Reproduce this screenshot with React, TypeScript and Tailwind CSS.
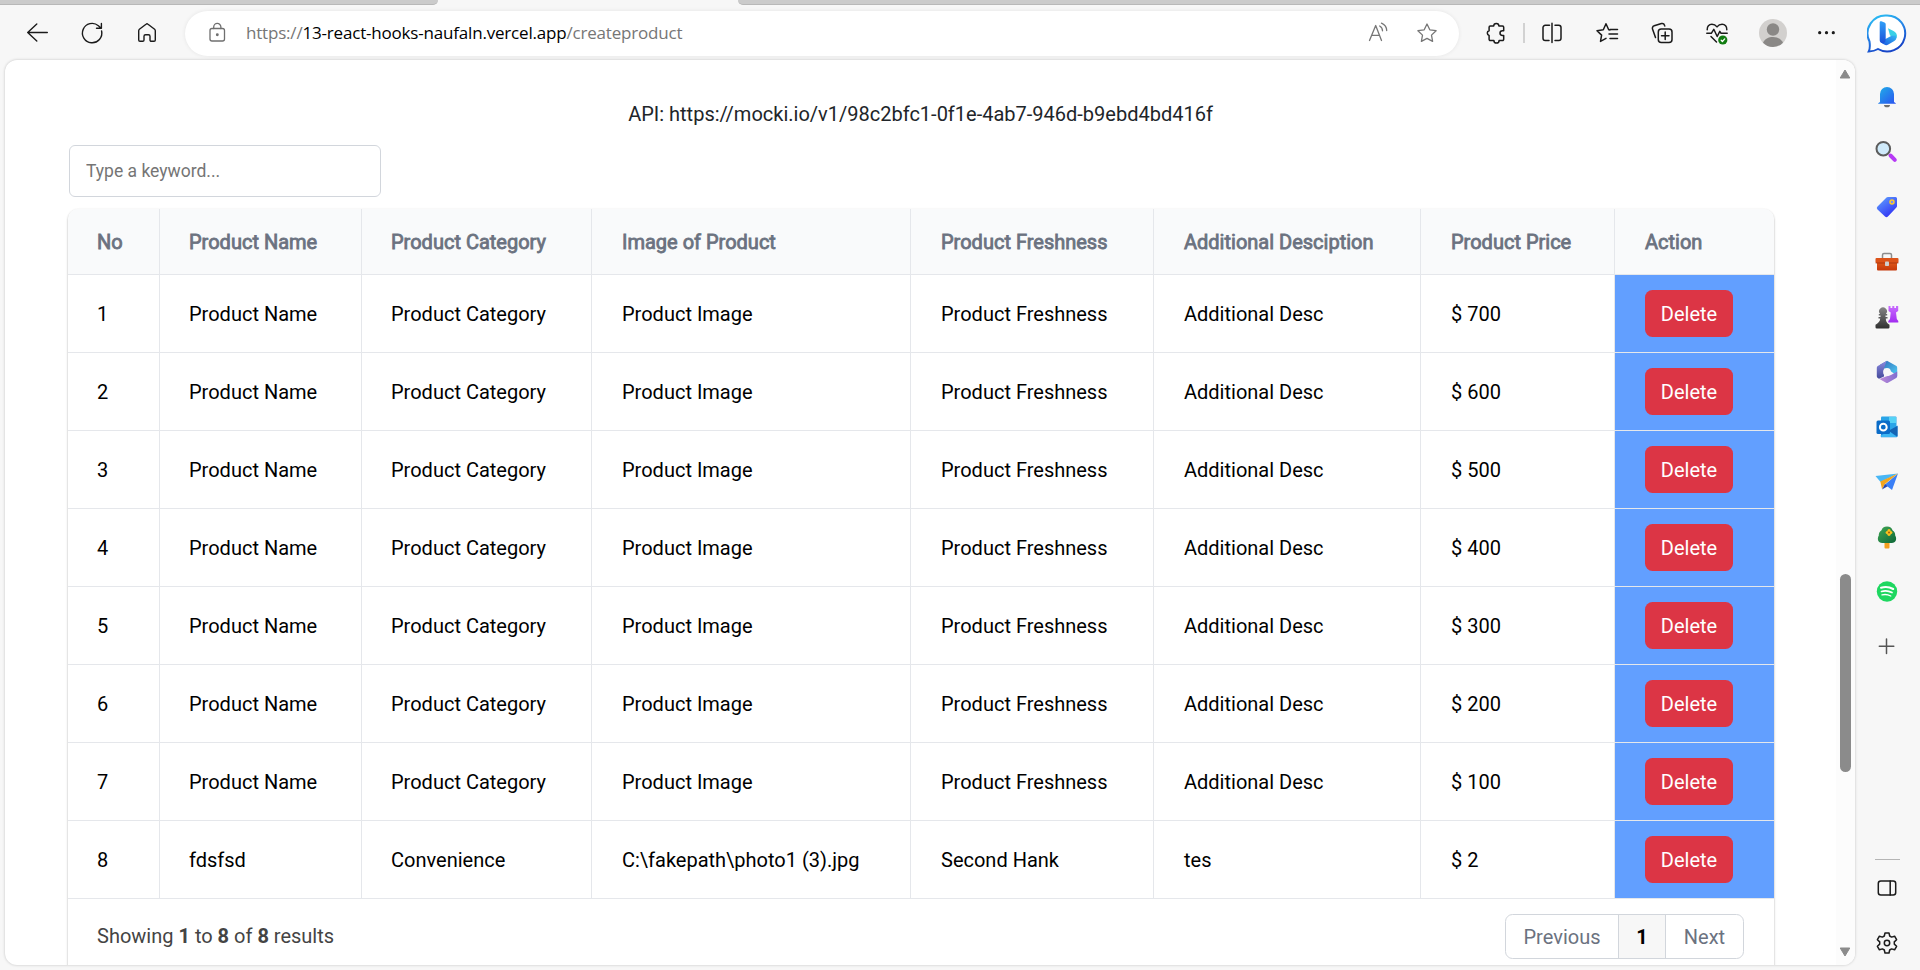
import React from "react";

type IconProps = { className?: string; children: React.ReactNode; size?: number; stroke?: string; sw?: number };

function Svg({ className = "", children, size = 24, stroke = "#1b1b1b", sw = 1.5 }: IconProps) {
  return (
    <svg
      width={size}
      height={size}
      viewBox="0 0 24 24"
      fill="none"
      stroke={stroke}
      strokeWidth={sw}
      strokeLinecap="round"
      strokeLinejoin="round"
      className={"shrink-0 " + className}
    >
      {children}
    </svg>
  );
}

const STAR = "M12 3l2.800 5.800 6.300.9-4.600 4.400 1.100 6.300L12 17.400l-5.600 3 1.100-6.300-4.600-4.400 6.300-.9z";

function Toolbar() {
  return (
    <header className="flex h-[46px] w-full items-center">
      <div className="flex w-[185px] shrink-0 items-center pl-[25px]">
        <Svg className="mr-[31px]" sw={1.400}><path d="M22.300 11.500H2.700M11.800 3L2.700 11.500l9.100 8.500" /></Svg>
        <Svg className="mr-[31px]" sw={1.400}><path d="M21.600 10a9.700 9.700 0 1 1-3.200-5.300l2.800 2.500M21.400 2.500v4.700h-4.900" /></Svg>
        <Svg sw={1.400}><path d="M3.700 9.700a2 2 0 0 1 .7-1.500l6.600-5a1.600 1.600 0 0 1 2 0l6.600 5a2 2 0 0 1 .7 1.500V19a1.300 1.300 0 0 1-1.300 1.300h-2.700A1.300 1.300 0 0 1 15 19v-3.700a1.500 1.500 0 0 0-1.500-1.500h-3A1.500 1.500 0 0 0 9 15.300V19a1.300 1.300 0 0 1-1.300 1.300H5A1.300 1.300 0 0 1 3.700 19z" /></Svg>
      </div>
      <div className="flex h-[45px] w-[1274px] shrink-0 items-center rounded-full bg-white pl-5 shadow-[0_0_4px_rgba(0,0,0,0.08)]">
        <Svg stroke="#6f6f6f" sw={1.300}>
          <rect x="5" y="7.500" width="14.500" height="12.500" rx="2" />
          <path d="M8.700 7.500V6a3.600 3.600 0 0 1 7.200 0v1.500" />
          <circle cx="12.300" cy="13.700" r=".8" fill="#6f6f6f" />
        </Svg>
        <div className="-mt-px ml-[17px] flex-1 whitespace-pre font-['Open_Sans',sans-serif] text-[17px] leading-6 tracking-[-0.190px] text-[#767676]">
          https://<span className="text-black">13-react-hooks-naufaln.vercel.app</span>/createproduct
        </div>
        <Svg stroke="#767676" sw={1.300} className="mr-[25px]">
          <path d="M3.500 19.500L9.700 4.500 15.500 19.500M5.800 14.300h7.700M13.700 5c1.800 1 2.800 2.700 2.800 4.800M15.500 2.200c3.300 1.600 5.200 4 5.200 7.300" />
        </Svg>
        <Svg stroke="#767676" sw={1.300} className="mr-5"><path d={STAR} /></Svg>
      </div>
      <div className="flex flex-1 items-center pl-[25px]">
        <Svg><path d="M6.300 5h3.400a2.600 2.600 0 0 1 5.200 0h3.600a1.200 1.200 0 0 1 1.200 1.200v3.500h-1.300a2.400 2.400 0 0 0 0 4.800h1.300v3.800a1.200 1.200 0 0 1-1.200 1.200h-3.400a2.600 2.600 0 0 1-5.200 0H6.300a1.200 1.200 0 0 1-1.200-1.200v-3.800a2.500 2.500 0 0 1 0-4.800V6.200A1.200 1.200 0 0 1 6.300 5z" /></Svg>
        <span className="ml-[15px] mr-[15px] h-5 w-0.5 bg-[#d2d2d2]" />
        <Svg><path d="M9.500 4.300H5.300A2.300 2.300 0 0 0 3 6.600v10.600a2.300 2.300 0 0 0 2.300 2.300h3.700M15 4.300h3.700A2.300 2.300 0 0 1 21 6.600v10.600a2.300 2.300 0 0 1-2.300 2.300H15M12 2.300v19.200" /></Svg>
        <Svg className="ml-[31px]"><path d="M15 9l-1.300-.2L11 2.800 8.300 8.800 2 9.700l4.600 4.400-1.100 6.300 5.500-3M15 8.500h7.500M14 13h8.500M15 17.500h7.500" /></Svg>
        <Svg className="ml-[31px]"><rect x="8.300" y="8" width="13.700" height="13.500" rx="3" /><path d="M15.200 11v7.500M11.500 14.700h7.500M5.500 16.500L2.500 8a2.500 2.500 0 0 1 1.700-3.200l7.300-2.300a2.500 2.500 0 0 1 3 1.800l.3.700" /></Svg>
        <Svg className="ml-[31px]">
          <path d="M2.200 8.800C2 5.500 4 3.300 6.900 3.300c2.200 0 3.900 1.100 5.100 2.600 1.200-1.500 2.900-2.600 5.100-2.600 2.900 0 4.900 2.200 4.700 5.500M1.800 12.300h4.500l2.500-4 3.400 7.200 2.600-5.200 1.300 2h6.100M6 15.500l5.500 5.500" />
          <circle cx="17.800" cy="19" r="4.600" fill="#107c10" stroke="none" /><path d="M16.200 19.300l1.200 1.200 2.300-2.600" stroke="#fff" strokeWidth="1.300" />
        </Svg>
        <svg width="28" height="28" viewBox="0 0 28 28" className="ml-[30px] shrink-0">
          <circle cx="14" cy="14" r="14" fill="#d2d0ce" /><circle cx="14" cy="10.500" r="6.200" fill="#8a8886" />
          <path d="M4 23.700c1.600-3.700 5.500-5.700 10-5.700s8.400 2 10 5.700a14 14 0 0 1-20 0z" fill="#8a8886" />
        </svg>
        <Svg className="ml-7" stroke="none"><g fill="#1b1b1b"><circle cx="4.700" cy="11.700" r="1.600" /><circle cx="11.500" cy="11.700" r="1.600" /><circle cx="18.300" cy="11.700" r="1.600" /></g></Svg>
        <svg width="40" height="40" viewBox="0 0 40 40" className="ml-7 mt-px shrink-0">
          <defs>
            <linearGradient id="bingRing" x1="0" y1="0" x2=".4" y2="1"><stop stopColor="#2bc5f4" /><stop offset=".5" stopColor="#2588e8" /><stop offset="1" stopColor="#1746c8" /></linearGradient>
            <linearGradient id="bingStem" x1="0" y1="0" x2="0" y2="1"><stop stopColor="#2fa0f8" /><stop offset="1" stopColor="#1c4fd8" /></linearGradient>
            <linearGradient id="bingBase" x1="0" y1="1" x2="1" y2="0"><stop stopColor="#1b55e0" /><stop offset="1" stopColor="#35b8f2" /></linearGradient>
          </defs>
          <path d="M20 1.500a18 18 0 1 1-9 33.500c-2.500 1.500-5.500 2.300-9.300 2.500 1.400-2.500 1.300-6.500.8-10A18 18 0 0 1 20 1.500z" fill="#fff" stroke="url(#bingRing)" strokeWidth="2" />
          <path d="M21 14.200l5.500 2.700c3.200 1.600 4 4.400 3 7.100l-6.500-2.500z" fill="#3ad0e6" />
          <path d="M13.500 26.500l5-1.500 6-3.300 4.500-.2c1 2.300.3 4.300-1.700 5.500l-6 3.600a4 4 0 0 1-4.100 0c-2-1.200-3.700-2.300-3.700-4.100z" fill="url(#bingBase)" />
          <path d="M12.700 8.500c0-1 .9-1.500 1.700-1.200l3 1.200c.9.400 1.300 1 1.300 2V25c0 3-1.500 4.300-3 4.300s-3-1.300-3-3z" fill="url(#bingStem)" />
        </svg>
      </div>
    </header>
  );
}

function Sidebar() {
  const cell = "flex h-[54.900px] w-full items-center justify-center";
  return (
    <aside className="flex w-[64px] shrink-0 flex-col items-center pt-[10px]">
      <svg width="0" height="0" className="absolute">
        <defs>
          <linearGradient id="blue" x1="0" y1="0" x2="1" y2="1"><stop stopColor="#20b0e8" /><stop offset="1" stopColor="#2a52f0" /></linearGradient>
          <linearGradient id="tag" x1="0" y1="0" x2=".7" y2="1"><stop stopColor="#62a8ff" /><stop offset="1" stopColor="#3030f4" /></linearGradient>
          <linearGradient id="purple" x1="0" y1="0" x2="0" y2="1"><stop stopColor="#c86cff" /><stop offset="1" stopColor="#a22cf0" /></linearGradient>
          <linearGradient id="gray" x1="0" y1="0" x2="0" y2="1"><stop stopColor="#858585" /><stop offset="1" stopColor="#303030" /></linearGradient>
          <linearGradient id="box" x1="0" y1="0" x2="0" y2="1"><stop stopColor="#e5611f" /><stop offset="1" stopColor="#c5380a" /></linearGradient>
          <linearGradient id="tree" x1="0" y1="0" x2="1" y2="1"><stop stopColor="#41a855" /><stop offset="1" stopColor="#0d6638" /></linearGradient>
          <linearGradient id="hexTop" x1="0" y1="0" x2="1" y2="1"><stop stopColor="#3168b8" /><stop offset="1" stopColor="#4fd0f5" /></linearGradient>
          <linearGradient id="hexLeft" x1="0" y1="0" x2="0" y2="1"><stop stopColor="#8a8ae0" /><stop offset="1" stopColor="#454a9a" /></linearGradient>
          <linearGradient id="hexBottom" x1="0" y1="0" x2="1" y2="0"><stop stopColor="#c08ad8" /><stop offset="1" stopColor="#7f6fd0" /></linearGradient>
        </defs>
      </svg>
      <div className={cell}><Svg stroke="none"><path d="M5 17V9a7 7 0 0 1 14 0v8l1.800 1.300v.5H3.200v-.5z" fill="url(#blue)" /><path d="M9 20h6a3 2.300 0 0 1-6 0z" fill="#707070" /></Svg></div>
      <div className={cell}><Svg stroke="none" className="-ml-0.5"><path d="M16.500 15.500l4.300 4.300" stroke="#b63af5" strokeWidth="4" /><circle cx="9.300" cy="8.700" r="6.800" fill="#cfeafa" stroke="#5c5c5c" strokeWidth="2" /></Svg></div>
      <div className={cell}><Svg stroke="none"><path d="M13 2h7.500A1.500 1.500 0 0 1 22 3.500V11a2 2 0 0 1-.6 1.500l-8.500 9a2 2 0 0 1-2.900 0l-7.500-7a2 2 0 0 1 0-2.900l9-9A2 2 0 0 1 13 2z" fill="url(#tag)" /><circle cx="17" cy="7" r="2" fill="#7b8cf0" stroke="#fcc92d" strokeWidth="1.500" /></Svg></div>
      <div className={cell}><Svg stroke="none"><path d="M7.500 8V5a1.500 1.500 0 0 1 1.500-1.500h6A1.500 1.500 0 0 1 16.500 5v3" stroke="#8c8c8c" strokeWidth="1.500" /><rect x="2" y="10" width="20" height="10.500" rx="1" fill="url(#box)" /><rect x=".5" y="8" width="23" height="5" rx="1" fill="#dc5319" /><path d="M1 13h22" stroke="#9b2c08" strokeWidth=".7" /><rect x="10" y="11.500" width="4" height="4.500" rx=".8" fill="#cfcfcf" /></Svg></div>
      <div className={cell}><Svg stroke="none"><path d="M13.500 1h2v2h1.800V1h2v2H21V1h2.200v5L21 7.500l.8 6.500 1.500 2v1.500h-10V16l1.700-2 .7-6.500-2.200-1.500z" fill="url(#purple)" /><path d="M5.500 10.500H3.800V9h1.300a3.900 3.900 0 1 1 5.800 0h1.300v1.500h-1.700V12h2v1.600h-1.700c0 2.800 1 4.700 3.700 6.200v2.400a1.300 1.300 0 0 1-1.300 1.300H1.800a1.300 1.300 0 0 1-1.300-1.300v-2.400c2.700-1.500 4.700-3.400 4.700-6.200H3.500V12h2z" fill="url(#gray)" /></Svg></div>
      <div className={cell}><Svg stroke="none"><path d="M12 .8l9 5a2 2 0 0 1 1.200 1.900V16L15.500 11 9 8.500 5 4.700z" fill="url(#hexTop)" /><path d="M22.200 11.500v4.800a2 2 0 0 1-1 1.700L13 22.800a2 2 0 0 1-2 0L4.500 19l6.500-2.500 5-1.500z" fill="url(#hexBottom)" /><path d="M11.500 1L9 8.500v8L4 18.700l-1.200-.8a2 2 0 0 1-1-1.700V7.700a2 2 0 0 1 1-1.700z" fill="url(#hexLeft)" /><circle cx="12" cy="12" r="3.900" fill="#f7f7f7" /></Svg></div>
      <div className={cell}><Svg stroke="none"><rect x="6" y="1.500" width="15.500" height="15" rx="1" fill="#2aa5e8" /><path d="M14 2h7v6h-7z" fill="#55d2f6" /><path d="M6 11l8 5 8.500-5.500V21a1.200 1.200 0 0 1-1.200 1.200H6z" fill="#1d8ae0" /><path d="M22.500 11v10.500L13 16z" fill="#1464b4" /><path d="M5 21l9-5 8 6H7z" fill="#3db6f2" /><rect x="1.500" y="5.500" width="13.500" height="13.500" rx="1.500" fill="#0a6cc8" /><circle cx="8.300" cy="12.200" r="3.400" stroke="#fff" strokeWidth="2" /></Svg></div>
      <div className={cell}><Svg stroke="none"><path d="M.5 6L23 3.500 5.500 12z" fill="#49b7f5" /><path d="M23 3.500L17 20l-7-5.500z" fill="#3a7ff6" /><path d="M23 3.500L10 14l-3 5-1.700-7.500z" fill="#f3a51e" /><path d="M10 14l2.700 2.300L7 19.500z" fill="#2747b0" /></Svg></div>
      <div className={cell}><Svg stroke="none"><rect x="9.500" y="16" width="5" height="7.500" rx="1" fill="#f3a01f" /><path d="M12 1.500c3 0 5 1.500 5.500 3.700 2.300 1.500 2.800 3.600 2.700 5.300 2 3 .8 7.500-3.500 7.500H7.300c-4.300 0-5.500-4.500-3.500-7.500-.1-1.700.4-3.800 2.700-5.300C7 3 9 1.500 12 1.500z" fill="url(#tree)" /><g fill="#fcc01e"><circle cx="14" cy="5.700" r="1.600" /><circle cx="14" cy="9.300" r="1.600" /><circle cx="12.200" cy="7.500" r="1.600" /><circle cx="15.800" cy="7.500" r="1.600" /></g><circle cx="14" cy="7.500" r="1" fill="#a85a08" /></Svg></div>
      <div className={cell}><Svg stroke="none"><circle cx="12" cy="12.500" r="10.200" fill="#1ed760" /><path d="M6 8.800c4-1.200 8.500-.8 12.200 1.200" stroke="#fff" strokeWidth="2" /><path d="M6.500 12.500c3.500-1 7.300-.6 10.500 1.100" stroke="#fff" strokeWidth="1.700" /><path d="M7 15.900c3-.7 6-.4 8.800 1.100" stroke="#fff" strokeWidth="1.400" /></Svg></div>
      <div className={cell}><Svg stroke="#555" sw={1.500}><path d="M11.500 5v14.500M4.300 12.300h14.500" /></Svg></div>
      <div className="flex-1" />
      <span className="h-px w-[25px] bg-[#b5b5b5]" />
      <div className="mt-4 flex h-6"><Svg><rect x="3.300" y="5" width="17.400" height="14" rx="2.500" /><path d="M15.200 5v14" /></Svg></div>
      <div className="mb-[15px] mt-[31px] flex h-6">
        <Svg><circle cx="12" cy="12" r="2.700" /><path d="M10 2h4l.7 3 1.900 1.100 3-.9 2 3.500-2.300 2.200v2.200l2.300 2.200-2 3.500-3-.9-1.900 1.100-.7 3h-4l-.7-3-1.900-1.100-3 .9-2-3.500 2.300-2.200v-2.200L2.400 8.700l2-3.500 3 .9L9.300 5z" /></Svg>
      </div>
    </aside>
  );
}

const HEADERS = ["No", "Product Name", "Product Category", "Image of Product", "Product Freshness", "Additional Desciption", "Product Price", "Action"];

const ROWS: string[][] = [
  ...[700, 600, 500, 400, 300, 200, 100].map((price, i) => [
    String(i + 1), "Product Name", "Product Category", "Product Image", "Product Freshness", "Additional Desc", "$ " + price,
  ]),
  ["8", "fdsfsd", "Convenience", "C:\\fakepath\\photo1 (3).jpg", "Second Hank", "tes", "$ 2"],
];

const GRID = "grid grid-cols-[91px_202px_230px_319px_243px_267px_194px_160px]";

function cellClass(i: number) {
  if (i === 0) return "flex items-center pl-[29px]";
  if (i < 3) return "flex items-center border-l border-[#e5e7eb] pl-[29px]";
  return "flex items-center border-l border-[#e5e7eb] pl-[30px]";
}

function ProductTable() {
  return (
    <div className="w-[1706px] rounded-[10px] bg-white shadow-[0_1px_3px_0_rgba(0,0,0,0.1),0_1px_2px_0_rgba(0,0,0,0.26)]">
      <div className={GRID + " h-[66px] overflow-hidden rounded-t-[10px] border-b border-[#e5e7eb] bg-[#f9fafb] text-[#6b7280]"}>
        {HEADERS.map((h, i) => (
          <div key={h} className={cellClass(i) + " [-webkit-text-stroke:0.800px_#6b7280]"}>{h}</div>
        ))}
      </div>
      {ROWS.map((row) => (
        <div key={row[0]} className={GRID + " h-[78px] border-b border-[#e5e7eb] text-black"}>
          {row.map((c, i) => (
            <div key={i} className={cellClass(i)}>{c}</div>
          ))}
          <div className="flex items-center border-l border-[#e5e7eb] bg-[#629fff] pl-[30px]">
            <button className="h-[47px] w-[88px] rounded-[7.500px] bg-[#dc3545] text-white">Delete</button>
          </div>
        </div>
      ))}
      <div className="flex h-[90px] items-start justify-between pl-[29px] pr-[30px] pt-[15px]">
        <p className="pt-[7px] leading-[30px] text-[#444]">
          Showing <b className="font-bold">1</b> to <b className="font-bold">8</b> of <b className="font-bold">8</b> results
        </p>
        <div className="flex h-[45px] w-[239px] overflow-hidden rounded-[7.500px] border border-[#d2d6dc] text-[#6b7280]">
          <button className="w-[112px] shrink-0">Previous</button>
          <button className="w-12 shrink-0 border-x border-[#d2d6dc] bg-[#f7f7f7] font-bold text-black">1</button>
          <button className="flex-1">Next</button>
        </div>
      </div>
    </div>
  );
}

export default function App() {
  return (
    <div className="flex h-[970px] w-[1920px] flex-col overflow-hidden bg-[#f7f7f7] font-[Roboto,sans-serif] text-[20px] leading-[30px]">
      <div className="mb-[5px] flex h-[5px] shrink-0 justify-between">
        <span className="w-[438px] rounded-br-md border-b border-[#b8b8b8] bg-[#cbcbcb]" />
        <span className="w-[1182px] rounded-bl-md border-b border-[#b8b8b8] bg-[#cbcbcb]" />
      </div>
      <Toolbar />
      <div className="flex min-h-0 flex-1 pt-1">
        <main className="ml-[5px] flex h-[905px] w-[1850px] shrink-0 overflow-hidden rounded-[12px] bg-white shadow-[0_0_3px_rgba(0,0,0,0.22)]">
          <div className="h-full w-[1831px] pl-[63px]">
            <p className="pt-[39px] text-center text-[#212529]"><span className="mr-[63px]">API: https://mocki.io/v1/98c2bfc1-0f1e-4ab7-946d-b9ebd4bd416f</span></p>
            <input
              placeholder="Type a keyword..."
              className="mb-[12px] ml-px mt-4 block h-[52px] w-[312px] rounded-md border border-[#d2d6dc] bg-white px-4 text-[17.500px] outline-none placeholder:text-[#757575]"
            />
            <ProductTable />
          </div>
          <div className="flex w-[19px] flex-col items-center bg-[#fcfcfc] pr-px">
            <svg width="12" height="10" viewBox="0 0 12 10" className="mt-[9px]"><path d="M6 1L10.800 9H1.200z" fill="#8b8b8b" stroke="#8b8b8b" strokeLinejoin="round" /></svg>
            <span className="mt-[495px] h-[198px] w-[11px] rounded-full bg-[#8b8b8b]" />
            <svg width="12" height="10" viewBox="0 0 12 10" className="mt-[175px]"><path d="M6 9L10.800 1H1.200z" fill="#8b8b8b" stroke="#8b8b8b" strokeLinejoin="round" /></svg>
          </div>
        </main>
        <Sidebar />
      </div>
    </div>
  );
}
